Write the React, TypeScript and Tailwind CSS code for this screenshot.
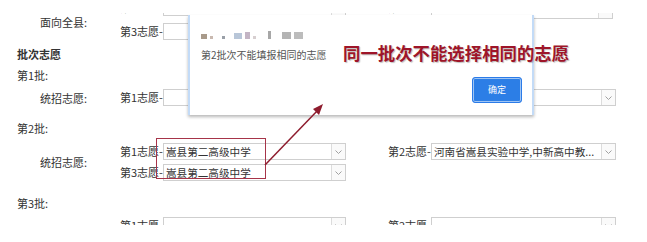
import React from "react";

const FONT = { fontFamily: '"Noto Sans CJK SC", "Noto Sans", sans-serif' };

const Select = ({ className, text }: { className: string; text?: string }) => (
  <div className={`flex h-[17px] border border-[#cfcfcf] bg-white ${className}`}>
    <div className="min-w-0 flex-1 overflow-hidden whitespace-nowrap pl-[2px] text-[10.6px] leading-[15px] text-[#333]">
      {text}
    </div>
    <div className="flex w-[14px] items-center justify-center border-l border-[#dcdcdc] bg-[#fafafa]">
      <svg width="7" height="4" viewBox="0 0 7 4">
        <path d="M0.5 0.5 L3.5 3.5 L6.5 0.5" fill="none" stroke="#a0a0a0" strokeWidth="1" />
      </svg>
    </div>
  </div>
);

const Item = ({ label, text, right, className = "" }: { label: string; text?: string; right?: boolean; className?: string }) => (
  <div className={`flex items-center ${className}`}>
    <span className="w-[43px] whitespace-nowrap text-[11px] leading-[17px] text-[#333]">{label}</span>
    <Select className={right ? "w-[185px]" : "w-[183px]"} text={text} />
  </div>
);

const Group = ({ label, children, gap }: { label: string; children: React.ReactNode; gap: string }) => (
  <div className="flex items-center">
    <div className="w-[120px] pl-[40px] text-[11px] leading-[16px] text-[#333]">{label}</div>
    <div className={`flex flex-col ${gap}`}>{children}</div>
  </div>
);

const Row = ({ children, className = "" }: { children: React.ReactNode; className?: string }) => (
  <div className={`flex gap-[42px] ${className}`}>{children}</div>
);

const Heading = ({ children, className }: { children: React.ReactNode; className: string }) => (
  <div className={`h-[20px] pl-[17px] text-[11px] leading-[20px] text-[#333] ${className}`}>{children}</div>
);

export default function App() {
  return (
    <div className="relative h-[242px] w-[647px] overflow-hidden bg-white" style={FONT}>
      <div className="h-[225px] overflow-hidden pt-[13px]">
        {/* top group: first row mostly cut off */}
        <div className="flex h-[6px] items-end overflow-hidden pl-[120px]">
          <Row className="items-end">
            <Item label="第1志愿-" className="mb-[3px]" />
            <div className="flex items-end">
              <span className="mb-[3px] w-[43px] whitespace-nowrap text-[11px] leading-[17px] text-[#333]">第2志愿-</span>
              <Select className="w-[182px]" />
            </div>
          </Row>
        </div>
        <div className="mt-[4px] flex">
          <div className="-mt-[9px] w-[120px] self-start pl-[40px] text-[11px] leading-[16px] text-[#333]">面向全县:</div>
          <Row className="items-center">
            <Item label="第3志愿-" />
          </Row>
        </div>
        <Heading className="mt-[4px] font-bold">批次志愿</Heading>
        <Heading className="mt-[1px]">第1批:</Heading>
        <div className="mt-[4px]">
          <Group label="统招志愿:" gap="gap-[4px]">
            <Row className="items-center">
              <Item label="第1志愿-" />
              <Item label="第2志愿-" right />
            </Row>
          </Group>
        </div>
        <Heading className="mt-[12px]">第2批:</Heading>
        <div className="mt-[5px]">
          <Group label="统招志愿:" gap="gap-[4px]">
            <Row className="items-center">
              <Item label="第1志愿-" text="嵩县第二高级中学" />
              <Item label="第2志愿-" text="河南省嵩县实验中学,中新高中教..." right />
            </Row>
            <Row className="items-center">
              <Item label="第3志愿-" text="嵩县第二高级中学" />
            </Row>
          </Group>
        </div>
        <Heading className="mt-[12px]">第3批:</Heading>
        <div className="mt-[4px]">
          <Group label="" gap="gap-[4px]">
            <Row className="items-center">
              <Item label="第1志愿-" />
              <Item label="第2志愿-" right />
            </Row>
          </Group>
        </div>
      </div>

      {/* Dialog */}
      <div className="absolute left-[188px] top-[15px] h-[100px] w-[346px] border-x-[2px] border-[#c3dbf7] bg-white shadow-[0_2px_3px_rgba(0,0,0,0.28)]">
        <div className="absolute left-[11px] top-[15px] flex h-[9px] items-end gap-[3px] blur-[0.6px]">
          <div className="h-[5px] w-[6px] bg-[#a89a8a]" />
          <div className="h-[3px] w-[3px] bg-[#c9b9b0]" />
          <div className="ml-[6px] h-[3px] w-[3px] bg-[#9aa0a8]" />
          <div className="ml-[6px] h-[6px] w-[8px] bg-[#b8c6d8]" />
          <div className="h-[7px] w-[5px] bg-[#c3b4c4]" />
          <div className="h-[3px] w-[3px] bg-[#d7cfd0]" />
          <div className="ml-[9px] h-[8px] w-[3px] bg-[#a7a7a7]" />
          <div className="ml-[8px] h-[7px] w-[9px] bg-[#b4b4b4]" />
          <div className="h-[7px] w-[9px] bg-[#bcbcbc]" />
        </div>
        <div className="absolute left-[11px] top-[34px] whitespace-nowrap text-[10px] leading-[12px] text-[#555]">
          第2批次不能填报相同的志愿
        </div>
        <div className="absolute left-[282px] top-[62px] flex h-[26px] w-[50px] items-center justify-center rounded-[3px] border border-[#2b7be8] bg-[#2c7ee6] shadow-[inset_0_0_0_1px_rgba(255,255,255,0.55)]">
          <span className="text-[9px] leading-[10px] text-white">确定</span>
        </div>
      </div>

      {/* annotation text */}
      <div
        className="absolute left-[343px] top-[42px] whitespace-nowrap text-[17.4px] font-bold leading-[22px] text-[#9e1529]"
        style={{ textShadow: "1px 1px 1px rgba(0,0,0,0.25), 0 0 2px #fff" }}
      >
        同一批次不能选择相同的志愿
      </div>

      {/* red rectangle */}
      <div className="absolute left-[156px] top-[138px] h-[41px] w-[110px] border border-[#a63449]" />

      {/* arrow */}
      <svg className="absolute left-0 top-0" width="647" height="242">
        <line x1="265" y1="165" x2="319" y2="109" stroke="#8e1c2e" strokeWidth="1.5" />
        <path d="M323 104 L313 109 L319 115 Z" fill="#8e1c2e" />
      </svg>
    </div>
  );
}
